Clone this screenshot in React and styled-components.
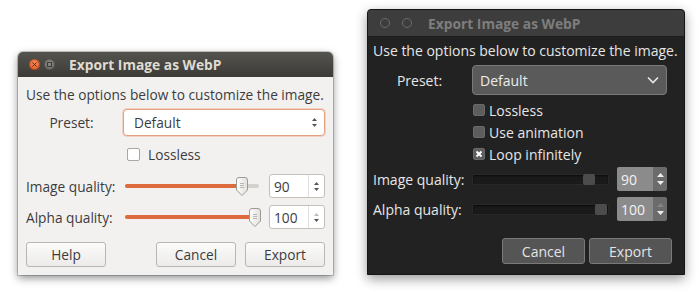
import styled, { createGlobalStyle } from "styled-components";

const GlobalStyle = createGlobalStyle`
  html, body {
    margin: 0;
    padding: 0;
    background: #ffffff;
  }
  body {
    font-family: "Open Sans", "DejaVu Sans", sans-serif;
  }
`;

const Page = styled.div`
  width: 700px;
  height: 292px;
  box-sizing: border-box;
  display: flex;
  align-items: flex-end;
  gap: 34px;
  padding: 0 0 17px 18px;
  overflow: hidden;
`;

/* ---------- light (Ubuntu Ambiance) window ---------- */

const LightWindow = styled.div`
  width: 315px;
  height: 223px;
  display: flex;
  flex-direction: column;
  border-radius: 5px 5px 0 0;
  background: #f2f1f0;
  box-shadow: 0 3px 9px rgba(0, 0, 0, 0.45), 0 0 0 1px rgba(0, 0, 0, 0.18);
  color: #3c3c3c;
  font-size: 13.7px;
`;

const LightTitle = styled.div`
  height: 25px;
  flex: none;
  display: flex;
  align-items: center;
  padding-left: 11px;
  border-radius: 5px 5px 0 0;
  background: linear-gradient(#55534e, #3c3b37);
  color: #dfdbd2;
  font-weight: 700;
  font-size: 13.8px;
`;

const WinButton = styled.span`
  width: 11px;
  height: 11px;
  border-radius: 50%;
  margin-right: ${(p) => p.$gap}px;
  display: flex;
  align-items: center;
  justify-content: center;
  background: ${(p) =>
    p.$close
      ? "radial-gradient(circle at 50% 35%, #f58a5c, #df4f17)"
      : "radial-gradient(circle at 50% 35%, #8e8c86, #65635e)"};
  box-shadow: inset 0 0 0 1px rgba(0, 0, 0, 0.25);
`;

const LightBody = styled.div`
  flex: 1;
  display: flex;
  flex-direction: column;
  padding: 9px 8px 8px 8px;
`;

const Intro = styled.div`
  height: 18px;
  line-height: 18px;
  white-space: nowrap;
`;

const Form = styled.div`
  display: grid;
  grid-template-columns: ${(p) => p.$label}px 1fr;
  column-gap: ${(p) => p.$colGap}px;
  padding-right: ${(p) => p.$right || 0}px;
`;

const Label = styled.div`
  display: flex;
  align-items: center;
  justify-content: ${(p) => (p.$center ? "center" : "flex-start")};
  white-space: nowrap;
  height: ${(p) => p.$h}px;
  margin-top: ${(p) => p.$mt || 0}px;
`;

const Cell = styled.div`
  grid-column: 2;
  display: flex;
  align-items: center;
  gap: ${(p) => p.$gap || 0}px;
  height: ${(p) => p.$h}px;
  margin-top: ${(p) => p.$mt || 0}px;
`;

const LightCombo = styled.div`
  flex: 1;
  height: 100%;
  box-sizing: border-box;
  margin-left: -2px;
  border: 1px solid #e3a17f;
  border-radius: 4px;
  background: #ffffff;
  box-shadow: 0 0 0 1px rgba(240, 150, 110, 0.35);
  display: flex;
  align-items: center;
  justify-content: space-between;
  padding: 0 7px 0 10px;
`;

const ArrowPair = styled.span`
  display: flex;
  flex-direction: column;
  gap: 3px;
`;

const LightCheck = styled.span`
  width: 13px;
  height: 13px;
  box-sizing: border-box;
  border: 1px solid #a9a7a2;
  border-radius: 2px;
  background: #fff;
  margin: 0 8px 0 2px;
`;

const SliderWrap = styled.div`
  flex: 1;
  position: relative;
  height: 100%;
  display: flex;
  align-items: center;
`;

const LightTrack = styled.div`
  width: 100%;
  height: 4px;
  border-radius: 2px;
  background: #d3d1cd;
  overflow: hidden;
  display: flex;
`;

const LightFill = styled.div`
  height: 100%;
  background: #de6b3d;
`;

const ThumbSlot = styled.div`
  position: absolute;
  top: 3px;
  transform: translateX(-50%);
  display: flex;
`;

const LightSpin = styled.div`
  width: 56px;
  height: 100%;
  box-sizing: border-box;
  border: 1px solid #c3c0bb;
  border-radius: 3px;
  background: #fff;
  display: flex;
`;

const SpinValue = styled.div`
  flex: 1;
  display: flex;
  align-items: center;
  padding-left: 4px;
`;

const LightArrows = styled.div`
  width: 15px;
  border-left: 1px solid #e2e0dc;
  display: flex;
  flex-direction: column;
  align-items: center;
  justify-content: center;
  gap: 3px;
`;

const LightButtons = styled.div`
  display: flex;
  gap: 9px;
  margin-top: 13px;
  height: 25px;
`;

const LightButton = styled.button`
  width: 80px;
  height: 25px;
  box-sizing: border-box;
  border: 1px solid #b9b6b0;
  border-radius: 3px;
  background: linear-gradient(#fbfbfa, #ecebe9);
  color: #3c3c3c;
  font-family: inherit;
  font-size: 13.7px;
  padding: 0;
  margin-left: ${(p) => (p.$push ? "auto" : "0")};
`;

/* ---------- dark window ---------- */

const DarkWindow = styled.div`
  width: 318px;
  height: 266px;
  box-sizing: border-box;
  display: flex;
  flex-direction: column;
  background: #222222;
  border: 1px solid #151515;
  border-radius: 4px 4px 0 0;
  box-shadow: 0 4px 12px rgba(0, 0, 0, 0.4);
  color: #e6e6e6;
  font-size: 14px;
`;

const DarkTitle = styled.div`
  height: 26px;
  flex: none;
  display: flex;
  align-items: center;
  padding-left: 12px;
  background: #3d3d3d;
  border-bottom: 1px solid #1d1d1d;
  border-radius: 3px 3px 0 0;
  color: #7d7d7d;
  font-weight: 700;
  font-size: 13.8px;
`;

const Ring = styled.span`
  width: 8px;
  height: 8px;
  border: 1px solid #6c6c6c;
  border-radius: 50%;
  margin-right: ${(p) => p.$gap}px;
`;

const DarkBody = styled.div`
  flex: 1;
  display: flex;
  flex-direction: column;
  padding: 5px 11px 11px 5px;
`;

const DarkCombo = styled.div`
  flex: 1;
  height: 100%;
  box-sizing: border-box;
  border: 1px solid #7a7a7a;
  border-radius: 4px;
  background: #5a5a5a;
  display: flex;
  align-items: center;
  justify-content: space-between;
  padding: 0 7px 0 7px;
  color: #ececec;
`;

const DarkCheckRow = styled.div`
  grid-column: 2;
  display: flex;
  align-items: center;
  height: 18px;
  margin-top: ${(p) => p.$mt}px;
  padding-left: 1px;
`;

const DarkCheck = styled.span`
  width: 12px;
  height: 12px;
  box-sizing: border-box;
  border-radius: 2px;
  background: #5d5d5d;
  border: 1px solid #6a6a6a;
  margin-right: 4px;
  display: flex;
  align-items: center;
  justify-content: center;
`;

const DarkTrack = styled.div`
  flex: 1;
  height: 11px;
  box-sizing: border-box;
  border-radius: 2px;
  background: #1a1a1a;
  border: 1px solid #282828;
  box-shadow: inset 0 1px 2px rgba(0, 0, 0, 0.6);
  position: relative;
`;

const DarkThumb = styled.span`
  position: absolute;
  top: -1px;
  width: 12px;
  height: 11px;
  border-radius: 2px;
  background: #4c4c4c;
  transform: translateX(-50%);
`;

const DarkSpin = styled.div`
  width: 50px;
  height: 100%;
  display: flex;
  border-radius: 2px;
  overflow: hidden;
`;

const DarkValue = styled.div`
  flex: 1;
  background: #8b8b8b;
  color: #f2f2f2;
  display: flex;
  align-items: center;
  padding-left: 4px;
`;

const DarkArrows = styled.div`
  width: 14px;
  background: #6b6b6b;
  display: flex;
  flex-direction: column;
  align-items: center;
  justify-content: center;
  gap: 4px;
`;

const DarkButtons = styled.div`
  display: flex;
  justify-content: flex-end;
  gap: 4px;
  margin-top: 17px;
  padding-right: 1px;
`;

const DarkButton = styled.button`
  width: 83px;
  height: 26px;
  box-sizing: border-box;
  border: 1px solid #7a7a7a;
  border-radius: 3px;
  background: #555555;
  color: #e4e4e4;
  font-family: inherit;
  font-size: 14px;
  padding: 0;
`;

/* ---------- drawings ---------- */

const Tri = ({ up, color = "#555", w = 6, h = 3 }) => (
  <svg width={w} height={h} viewBox={`0 0 ${w} ${h}`}>
    <polygon
      points={up ? `0,${h} ${w / 2},0 ${w},${h}` : `0,0 ${w},0 ${w / 2},${h}`}
      fill={color}
    />
  </svg>
);

const LightThumb = () => (
  <svg width="12" height="19" viewBox="0 0 12 19">
    <defs>
      <linearGradient id="tg" x1="0" x2="1">
        <stop offset="0" stopColor="#fdfdfc" />
        <stop offset="1" stopColor="#e2e0dd" />
      </linearGradient>
    </defs>
    <path
      d="M3 0.5 H9 Q11.5 0.5 11.5 3 V13 L6 18.5 L0.5 13 V3 Q0.5 0.5 3 0.5 Z"
      fill="url(#tg)"
      stroke="#9c9a95"
    />
    <path d="M4 6.5 H8 M4 8.5 H8 M4 10.5 H8" stroke="#b8b6b1" strokeWidth="1" />
  </svg>
);

const LightSlider = ({ pct }) => (
  <SliderWrap>
    <LightTrack>
      <LightFill style={{ width: `${pct}%` }} />
    </LightTrack>
    <ThumbSlot style={{ left: `${pct}%` }}>
      <LightThumb />
    </ThumbSlot>
  </SliderWrap>
);

const Chevron = () => (
  <svg width="12" height="8" viewBox="0 0 12 8">
    <path d="M1 1.5 L6 6.5 L11 1.5" fill="none" stroke="#e8e8e8" strokeWidth="1.6" />
  </svg>
);

const CrossMark = () => (
  <svg width="8" height="8" viewBox="0 0 8 8">
    <path d="M1.5 1.5 L6.5 6.5 M6.5 1.5 L1.5 6.5" stroke="#ffffff" strokeWidth="2" />
  </svg>
);

const CloseGlyph = () => (
  <svg width="5" height="5" viewBox="0 0 5 5">
    <path d="M0.5 0.5 L4.5 4.5 M4.5 0.5 L0.5 4.5" stroke="#5a2410" strokeWidth="1" />
  </svg>
);

const SquareGlyph = () => (
  <svg width="5" height="5" viewBox="0 0 5 5">
    <rect x="0.5" y="0.5" width="4" height="4" fill="none" stroke="#3d3c38" strokeWidth="1" />
  </svg>
);

export default function App() {
  return (
    <>
      <GlobalStyle />
      <Page>
        <LightWindow>
          <LightTitle>
            <WinButton $close $gap={4}>
              <CloseGlyph />
            </WinButton>
            <WinButton $gap={14}>
              <SquareGlyph />
            </WinButton>
            Export Image as WebP
          </LightTitle>
          <LightBody>
            <Intro>Use the options below to customize the image.</Intro>
            <Form $label={91} $colGap={8}>
              <Label $center $h={27} $mt={5}>Preset:</Label>
              <Cell $h={27} $mt={5}>
                <LightCombo>
                  Default
                  <ArrowPair>
                    <Tri up w={5} h={3} />
                    <Tri w={5} h={3} />
                  </ArrowPair>
                </LightCombo>
              </Cell>
              <Cell $h={16} $mt={10}>
                <LightCheck />
                Lossless
              </Cell>
              <Label $h={24} $mt={12}>Image quality:</Label>
              <Cell $h={24} $mt={12} $gap={10}>
                <LightSlider pct={87} />
                <LightSpin>
                  <SpinValue>90</SpinValue>
                  <LightArrows>
                    <Tri up w={5} h={3} />
                    <Tri w={5} h={3} />
                  </LightArrows>
                </LightSpin>
              </Cell>
              <Label $h={24} $mt={7}>Alpha quality:</Label>
              <Cell $h={24} $mt={7} $gap={10}>
                <LightSlider pct={97} />
                <LightSpin>
                  <SpinValue>100</SpinValue>
                  <LightArrows>
                    <Tri up w={5} h={3} color="#bbb" />
                    <Tri w={5} h={3} />
                  </LightArrows>
                </LightSpin>
              </Cell>
            </Form>
            <LightButtons>
              <LightButton>Help</LightButton>
              <LightButton $push>Cancel</LightButton>
              <LightButton>Export</LightButton>
            </LightButtons>
          </LightBody>
        </LightWindow>

        <DarkWindow>
          <DarkTitle>
            <Ring $gap={12} />
            <Ring $gap={16} />
            Export Image as WebP
          </DarkTitle>
          <DarkBody>
            <Intro>Use the options below to customize the image.</Intro>
            <Form $label={93} $colGap={6} $right={6}>
              <Label $center $h={30} $mt={5}>Preset:</Label>
              <Cell $h={30} $mt={5}>
                <DarkCombo>
                  Default
                  <Chevron />
                </DarkCombo>
              </Cell>
              <DarkCheckRow $mt={6}>
                <DarkCheck />
                Lossless
              </DarkCheckRow>
              <DarkCheckRow $mt={4}>
                <DarkCheck />
                Use animation
              </DarkCheckRow>
              <DarkCheckRow $mt={4}>
                <DarkCheck>
                  <CrossMark />
                </DarkCheck>
                Loop infinitely
              </DarkCheckRow>
              <Label $h={24} $mt={4}>Image quality:</Label>
              <Cell $h={24} $mt={4} $gap={8}>
                <DarkTrack>
                  <DarkThumb style={{ left: "86%" }} />
                </DarkTrack>
                <DarkSpin>
                  <DarkValue>90</DarkValue>
                  <DarkArrows>
                    <Tri up w={7} h={4} color="#eee" />
                    <Tri w={7} h={4} color="#eee" />
                  </DarkArrows>
                </DarkSpin>
              </Cell>
              <Label $h={24} $mt={6}>Alpha quality:</Label>
              <Cell $h={24} $mt={6} $gap={8}>
                <DarkTrack>
                  <DarkThumb style={{ left: "95%" }} />
                </DarkTrack>
                <DarkSpin>
                  <DarkValue>100</DarkValue>
                  <DarkArrows>
                    <Tri up w={7} h={4} color="#858585" />
                    <Tri w={7} h={4} color="#eee" />
                  </DarkArrows>
                </DarkSpin>
              </Cell>
            </Form>
            <DarkButtons>
              <DarkButton>Cancel</DarkButton>
              <DarkButton>Export</DarkButton>
            </DarkButtons>
          </DarkBody>
        </DarkWindow>
      </Page>
    </>
  );
}
